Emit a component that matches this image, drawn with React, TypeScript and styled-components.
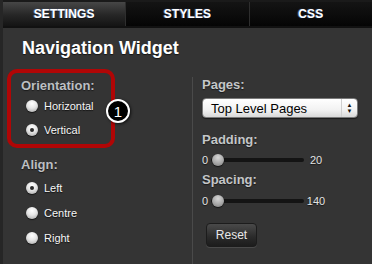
import React from "react";
import styled, { createGlobalStyle } from "styled-components";

const Global = createGlobalStyle`
  html, body { margin: 0; padding: 0; background: #333; }
  body { font-family: "Liberation Sans", Arial, Helvetica, sans-serif; }
  * { box-sizing: border-box; }
`;

const Frame = styled.div`
  width: 372px;
  height: 264px;
  background: #343434;
  display: flex;
  flex-direction: column;
  overflow: hidden;
  border-left: 3px solid #262626;
`;

const TabBar = styled.div`
  display: flex;
  height: 28px;
  background: #000;
  border-top: 2px solid #1a1a1a;
  border-bottom: 2px solid #111;
`;

const Tab = styled.div<{ $active?: boolean }>`
  flex: 1;
  display: flex;
  align-items: center;
  justify-content: center;
  font-weight: bold;
  font-size: 12px;
  color: #fff;
  letter-spacing: 0.1px;
  text-shadow: -1px 0 1px rgba(90, 130, 210, 0.9), 0 1px 1px rgba(0, 0, 0, 0.8);
  background: ${(p) =>
    p.$active
      ? "linear-gradient(#474747, #262626 55%, #141414)"
      : "linear-gradient(#141414, #050505)"};
  & + & {
    border-left: 1px solid #2e2e2e;
  }
`;

const Body = styled.div`
  flex: 1;
  display: flex;
  flex-direction: column;
  padding-top: 10px;
`;

const Title = styled.h1`
  margin: 0 0 11px 19px;
  font-size: 18px;
  line-height: 20px;
  font-weight: bold;
  color: #fff;
  text-shadow: 0 1px 1px rgba(0, 0, 0, 0.6);
`;

const Columns = styled.div`
  flex: 1;
  display: flex;
`;

const LeftCol = styled.div`
  width: 189px;
  padding-left: 4px;
  display: flex;
  flex-direction: column;
`;

const RightCol = styled.div`
  flex: 1;
  margin-top: 8px;
  border-left: 1px solid #4a4a4a;
  padding-left: 9px;
  display: flex;
  flex-direction: column;
`;

const Highlight = styled.div`
  position: relative;
  width: 108px;
  border: 4px solid #b00606;
  border-radius: 10px;
  padding: 5px 0 2px 10px;
`;

const Badge = styled.div`
  position: absolute;
  left: 95px;
  top: 26px;
  width: 24px;
  height: 24px;
  border-radius: 50%;
  background: #000;
  border: 2px solid #fff;
  color: #fff;
  font-size: 15px;
  display: flex;
  align-items: center;
  justify-content: center;
  box-shadow: 1px 1px 3px rgba(0, 0, 0, 0.7);
`;

const GroupLabel = styled.div`
  font-size: 13px;
  line-height: 16px;
  font-weight: bold;
  color: #bcbfc2;
  text-shadow: 0 1px 1px rgba(0, 0, 0, 0.5);
`;

const AlignGroup = styled.div`
  margin-top: 9px;
  padding-left: 14px;
`;

const RadioList = styled.div`
  margin-top: 2px;
`;

const RadioRow = styled.div<{ $h: number }>`
  height: ${(p) => p.$h}px;
  display: flex;
  align-items: center;
  gap: 6px;
  padding-left: 5px;
  font-size: 11px;
  color: #f6f6f6;
  text-shadow: 0 1px 1px rgba(0, 0, 0, 0.7);
`;

const RadioDot = styled.span<{ $checked?: boolean }>`
  width: 12px;
  height: 12px;
  border-radius: 50%;
  background: radial-gradient(circle at 50% 30%, #ffffff, #e6e6e6 45%, #a0a0a0);
  box-shadow: 0 1px 1px rgba(0, 0, 0, 0.6);
  display: flex;
  align-items: center;
  justify-content: center;
  &::after {
    content: "";
    width: 4px;
    height: 4px;
    border-radius: 50%;
    background: ${(p) => (p.$checked ? "#2a2a2a" : "transparent")};
  }
`;

const FieldLabel = styled.div<{ $mt?: number }>`
  font-size: 13px;
  line-height: 16px;
  font-weight: bold;
  color: #c4c6c8;
  text-shadow: 0 1px 1px rgba(0, 0, 0, 0.5);
  margin-top: ${(p) => p.$mt ?? 0}px;
`;

const Select = styled.div`
  margin-top: 5px;
  width: 156px;
  height: 20px;
  border-radius: 4px;
  border: 1px solid #7a7a7a;
  background: linear-gradient(#ffffff, #f2f2f2 60%, #d8d8d8);
  display: flex;
  align-items: center;
  font-size: 13px;
  color: #000;
  box-shadow: 0 1px 1px rgba(0, 0, 0, 0.5);
`;

const SelectText = styled.span`
  flex: 1;
  padding-left: 8px;
`;

const SelectArrows = styled.span`
  width: 16px;
  height: 100%;
  border-left: 1px solid #cfcfcf;
  display: flex;
  flex-direction: column;
  align-items: center;
  justify-content: center;
  font-size: 6px;
  line-height: 6px;
  color: #111;
`;

const SliderRow = styled.div<{ $mt: number }>`
  margin-top: ${(p) => p.$mt}px;
  height: 16px;
  display: flex;
  align-items: center;
  font-size: 11px;
  color: #e2e2e2;
  text-shadow: 0 1px 1px rgba(0, 0, 0, 0.6);
`;

const Min = styled.span`
  width: 9px;
`;

const Track = styled.div`
  position: relative;
  width: 93px;
  height: 4px;
  border-radius: 2px;
  background: #141414;
  display: flex;
  align-items: center;
`;

const Thumb = styled.span`
  position: absolute;
  left: 1px;
  width: 12px;
  height: 12px;
  border-radius: 50%;
  background: radial-gradient(circle at 50% 30%, #d6d6d6, #a8a8a8 55%, #7a7a7a);
  box-shadow: 0 1px 1px rgba(0, 0, 0, 0.6);
`;

const Max = styled.span`
  width: 24px;
  text-align: center;
`;

const Button = styled.button`
  margin: 14px 0 0 4px;
  width: 51px;
  height: 24px;
  border-radius: 4px;
  border: 1px solid #1c1c1c;
  background: linear-gradient(#4a4a4a, #2a2a2a 60%, #1c1c1c);
  color: #e8e8e8;
  font-family: inherit;
  font-size: 12px;
  padding: 0;
  box-shadow: 0 1px 0 #4a4a4a;
`;

function Radio({ label, checked, h }: { label: string; checked?: boolean; h: number }) {
  return (
    <RadioRow $h={h}>
      <RadioDot $checked={checked} />
      <span>{label}</span>
    </RadioRow>
  );
}

function Slider({ max, mt }: { max: string; mt: number }) {
  return (
    <SliderRow $mt={mt}>
      <Min>0</Min>
      <Track>
        <Thumb />
      </Track>
      <Max>{max}</Max>
    </SliderRow>
  );
}

export default function App() {
  return (
    <>
      <Global />
      <Frame>
        <TabBar>
          <Tab $active>SETTINGS</Tab>
          <Tab>STYLES</Tab>
          <Tab>CSS</Tab>
        </TabBar>
        <Body>
          <Title>Navigation Widget</Title>
          <Columns>
            <LeftCol>
              <Highlight>
                <GroupLabel>Orientation:</GroupLabel>
                <Radio label="Horizontal" h={24} />
                <Radio label="Vertical" checked h={24} />
                <Badge>1</Badge>
              </Highlight>
              <AlignGroup>
                <GroupLabel>Align:</GroupLabel>
                <RadioList>
                  <Radio label="Left" checked h={25} />
                  <Radio label="Centre" h={25} />
                  <Radio label="Right" h={25} />
                </RadioList>
              </AlignGroup>
            </LeftCol>
            <RightCol>
              <FieldLabel>Pages:</FieldLabel>
              <Select>
                <SelectText>Top Level Pages</SelectText>
                <SelectArrows>
                  <span>▲</span>
                  <span>▼</span>
                </SelectArrows>
              </Select>
              <FieldLabel $mt={14}>Padding:</FieldLabel>
              <Slider max="20" mt={4} />
              <FieldLabel $mt={4}>Spacing:</FieldLabel>
              <Slider max="140" mt={5} />
              <div>
                <Button>Reset</Button>
              </div>
            </RightCol>
          </Columns>
        </Body>
      </Frame>
    </>
  );
}
